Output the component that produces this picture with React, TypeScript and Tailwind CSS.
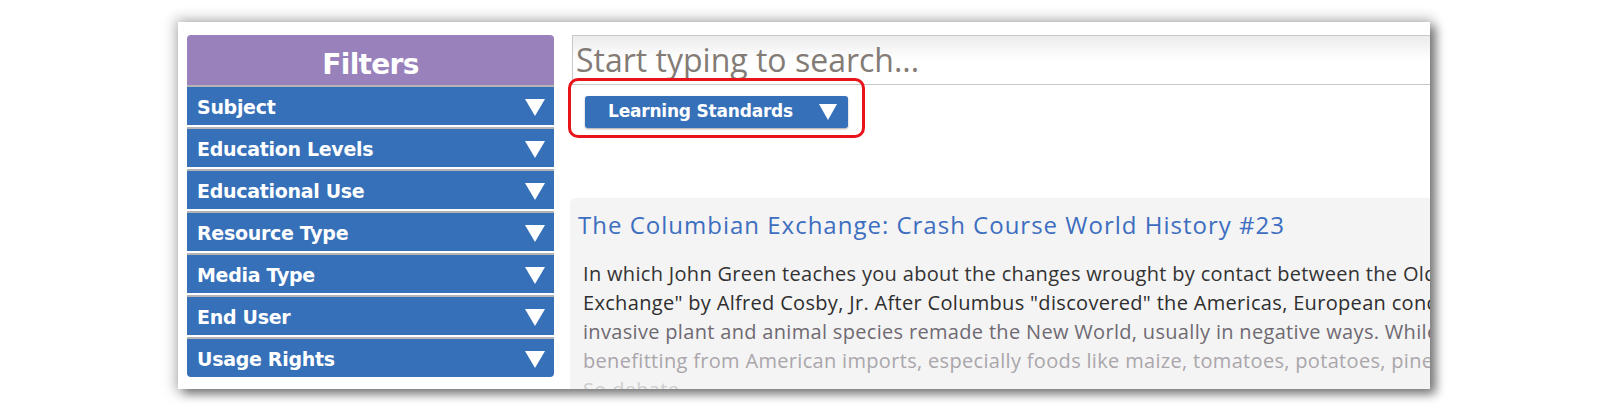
const filters = [
  "Subject",
  "Education Levels",
  "Educational Use",
  "Resource Type",
  "Media Type",
  "End User",
  "Usage Rights",
]

const lines = [
  { text: 'In which John Green teaches you about the changes wrought by contact between the Old and New Worlds, called "The Columbian', color: "text-[#333333]" },
  { text: 'Exchange" by Alfred Cosby, Jr. After Columbus "discovered" the Americas, European conquerors, settlers, and their diseases and', color: "text-[#2e2e2e]" },
  { text: "invasive plant and animal species remade the New World, usually in negative ways. While Europe and Asia were", color: "text-[#6f6a72]" },
  { text: "benefitting from American imports, especially foods like maize, tomatoes, potatoes, pineapples, cacao, and", color: "text-[#aaa6ab]" },
  { text: "So debate...", color: "text-[#cfcfcf]" },
]

function Triangle({ w, h }: { w: number; h: number }) {
  return (
    <svg width={w} height={h} viewBox={`0 0 ${w} ${h}`} className="shrink-0">
      <polygon points={`0,0 ${w},0 ${w / 2},${h}`} fill="#ffffff" />
    </svg>
  )
}

export default function App() {
  return (
    <div className="w-[1611px] h-[414px] bg-white overflow-hidden pt-[22px] pl-[178px]">
      <div className="relative w-[1252px] h-[367px] bg-white overflow-hidden flex items-start gap-[16px] pt-[13px] pl-[9px] shadow-[0_0_12px_3px_rgba(0,0,0,0.28),6px_5px_9px_rgba(0,0,0,0.4)]">
        {/* ── Left: filters panel */}
        <aside className="w-[367px] shrink-0 flex flex-col font-['DejaVu_Sans',sans-serif] font-bold text-white">
          <div className="h-[50px] bg-[#9982bb] rounded-t-[4px] flex items-center justify-center pt-[10px] text-[28px] tracking-tight">
            Filters
          </div>
          <div className="flex flex-col gap-[2px]">
            {filters.map((f, i) => (
              <div
                key={f}
                className={
                  "h-[40px] border-t-2 border-[#b4b4b4] bg-[#3670b9] flex items-center justify-between pl-[10px] pr-[9px] pt-[3px] text-[19px] tracking-[-0.3px]" +
                  (i === filters.length - 1 ? " rounded-b-[4px]" : "")
                }
              >
                <span>{f}</span>
                <Triangle w={20} h={17} />
              </div>
            ))}
          </div>
        </aside>

        {/* ── Right: search + results */}
        <main className="flex-1 min-w-0 flex flex-col">
          <div className="ml-[2px] w-[1000px] h-[50px] border border-[#c8c8c8] bg-linear-to-b from-[#ececec] to-white to-50% flex items-center pl-[3px] font-['Open_Sans',sans-serif] text-[32px] text-[#837b76]">
            Start typing to search...
          </div>

          <div className="mt-[11px] ml-[15px] w-[263px] h-[32px] rounded-[3px] bg-[#3670b9] shadow-[0_1px_2px_rgba(0,0,0,0.35)] flex items-center justify-between pl-[23px] pr-[11px] font-['DejaVu_Sans',sans-serif] font-bold text-[17px] text-white tracking-[-0.2px]">
            <span>Learning Standards</span>
            <Triangle w={18} h={16} />
          </div>

          <div className="mt-[70px] w-[1000px] h-[300px] bg-[#f4f4f4] rounded-tl-[6px] font-['Open_Sans',sans-serif]">
            <h2 className="pt-[11px] pl-[8px] text-[24px] leading-[32px] font-medium tracking-[1px] text-[#3d6ec0] whitespace-nowrap">
              The Columbian Exchange: Crash Course World History #23
            </h2>
            <div className="mt-[18px] pl-[13px] text-[20px] leading-[29px] tracking-[0.32px]">
              {lines.map((l, i) => (
                <div key={i} className={"whitespace-nowrap " + l.color}>
                  {l.text}
                </div>
              ))}
            </div>
          </div>
        </main>

        {/* annotation */}
        <div className="absolute left-[390px] top-[56px] w-[297px] h-[60px] border-[3px] border-[#e8141a] rounded-[10px]" />
      </div>
    </div>
  )
}
